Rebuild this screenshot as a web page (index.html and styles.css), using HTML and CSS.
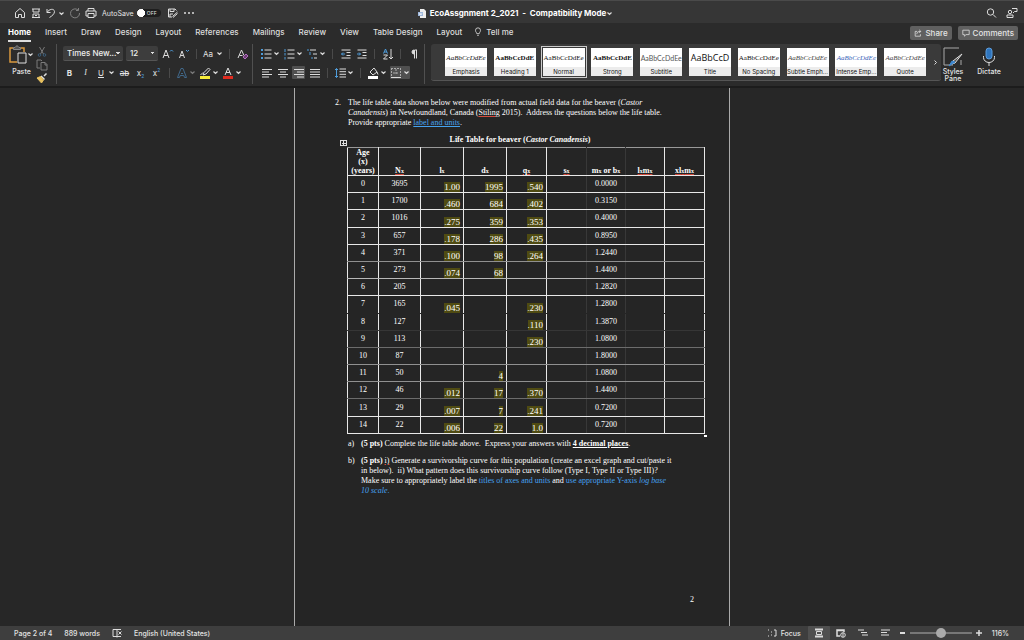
FILE: index.html
```html
<!DOCTYPE html>
<html lang="en">

<head>
    <meta charset="UTF-8">
    <meta name="viewport" content="width=device-width, initial-scale=1.0">
    <title>EcoAssgnment 2_2021</title>
    <link rel="stylesheet" href="styles.css">
</head>

<body>
    <svg class="sprite" aria-hidden="true">
        <symbol id="chev" viewBox="0 0 7 7"><path d="M1.5 2.5l2 2 2-2" fill="none" stroke="#ddd" stroke-width="1.2"/></symbol>
    </svg>

    <header class="titlebar">
        <div class="quick">
            <button class="tool" aria-label="Home"><svg viewBox="0 0 12 12"><path d="M1.5 5.5L6 1.5l4.500 4v5h-3v-3h-3v3h-3z"/></svg></button>
            <button class="tool" aria-label="Save"><svg viewBox="0 0 12 12"><path d="M2 2h8M2 10.500h8M3 2v3h6V2M3 10V7h6v3M5 8.500h2"/></svg></button>
            <button class="split" aria-label="Undo"><svg viewBox="0 0 12 12"><path d="M2 2v3.500h3.500M2 5.500C4 2 9 1 9.500 4.500 9.500 7 7 9 4.500 10.500"/></svg><svg class="chev"><use href="#chev"/></svg></button>
            <button class="tool dim" aria-label="Redo"><svg viewBox="0 0 12 12"><path d="M9 3A4.500 4.500 0 1 0 10.500 6M9.500 1v2.500H7"/></svg></button>
            <button class="tool" aria-label="Print"><svg viewBox="0 0 12 12"><path d="M3 4V1.500h6V4M3 9H1V4h10v5H9M3 6.500h6v4H3z"/></svg></button>
            <label class="autosave">AutoSave <input type="checkbox" class="toggle"><span class="off">OFF</span></label>
            <button class="tool edit" aria-label="Edit"><svg viewBox="0 0 12 12"><path d="M5 10H1.500V2H8l1.500 1.500M3 2v2.500h4V2M3 10V7h3M5.500 9.500l5-4.500M6 10.500l4.500-4"/></svg></button>
            <button class="tool" aria-label="More"><svg viewBox="0 0 12 12"><path d="M1 6h2M5 6h2M9 6h2" stroke-width="1.500"/></svg></button>
        </div>
        <h1 class="filename"><svg class="doc-icon" viewBox="0 0 9 9"><path d="M2 0h4l2 2v7H2z" fill="#eee"/><path d="M0 3h5v4H0z" fill="#9db7dc"/><path d="M1 4l1 2 .5-1.500.5 1.500 1-2" fill="none" stroke="#fff" stroke-width=".6"/></svg>EcoAssgnment 2_2021&nbsp; -&nbsp; Compatibility Mode<svg class="chev"><use href="#chev"/></svg></h1>
        <div class="account">
            <button class="tool" aria-label="Search"><svg viewBox="0 0 12 12"><circle cx="5.500" cy="5" r="3.200"/><path d="M8 7.500l3 3"/></svg></button>
            <button class="tool" aria-label="Account"><svg viewBox="0 0 12 12"><circle cx="4" cy="5" r="1.700"/><path d="M1 10.500V8h6v2.500zM6 1.500h5v3H8.500L7 6"/></svg></button>
        </div>
    </header>

    <nav class="tabs">
        <a class="tab active" href="#">Home</a>
        <a class="tab" href="#">Insert</a>
        <a class="tab" href="#">Draw</a>
        <a class="tab" href="#">Design</a>
        <a class="tab" href="#">Layout</a>
        <a class="tab" href="#">References</a>
        <a class="tab" href="#">Mailings</a>
        <a class="tab" href="#">Review</a>
        <a class="tab" href="#">View</a>
        <a class="tab" href="#">Table Design</a>
        <a class="tab" href="#">Layout</a>
        <a class="tab tell" href="#"><svg class="bulb" viewBox="0 0 8 12"><path d="M2.500 8C2.500 6.500 1 6 1 4a3 3 0 0 1 6 0c0 2-1.500 2.500-1.500 4zM3 10h2"/></svg>Tell me</a>
        <div class="actions">
            <button class="pill"><svg viewBox="0 0 10 10"><path d="M4 3H1.500v6H8V6.500M3.500 6.500C3.500 4 5 3 8.500 3M6.500 1l2 2-2 2"/></svg>Share</button>
            <button class="pill"><svg viewBox="0 0 10 10"><path d="M1 1.500h8v5.500H5L3 9V7H1z"/></svg>Comments</button>
        </div>
    </nav>

    <section class="ribbon">
        <div class="group clipboard">
            <button class="paste"><span class="paste-row"><svg class="paste-icon" viewBox="0 0 18 19"><path d="M4 3H1v14h7M12 3h3v4" stroke="#d9993f" stroke-width="1.500"/><path d="M4.500 4.500v-2H6l2-2 2 2h1.500v2z" stroke="#888" fill="#555"/><path d="M9 8h8v10H9z" stroke="#ddd" fill="#2b2b2b"/></svg><svg class="chev"><use href="#chev"/></svg></span>Paste</button>
            <div class="clip-tools">
                <button class="tool dim" aria-label="Cut"><svg viewBox="0 0 12 12"><path d="M3.500 1l4 7M8.500 1l-4 7"/><circle cx="3.500" cy="9" r="1.300" stroke="#4f9ddb"/><circle cx="8.500" cy="9" r="1.300" stroke="#4f9ddb"/></svg></button>
                <button class="tool dim" aria-label="Copy"><svg viewBox="0 0 12 12"><path d="M4 9H1V1h4l1 1M5 3.500h4l2 2V11H5zM9 3.500V6h2"/></svg></button>
                <button class="tool" aria-label="Format painter"><svg viewBox="0 0 12 12"><path d="M10.500 1.500L8 4M5 4l3.500 3.500" stroke-width="1.500"/><path d="M4.500 4.500L1 6l4.500 5 2-3z" fill="#e8c15f" stroke="#e8c15f"/></svg></button>
            </div>
        </div>

        <div class="group rows font-group">
            <div class="row">
                <select class="box font-name" aria-label="Font"><option>Times New...</option></select>
                <select class="box font-size" aria-label="Font size"><option>12</option></select>
                <button class="tool" aria-label="Grow font"><svg viewBox="0 0 12 12"><path d="M1 10l3-8 3 8M2 7.500h4"/><path d="M8 3.500L9.500 2 11 3.500" stroke="#4f9ddb"/></svg></button>
                <button class="tool" aria-label="Shrink font"><svg viewBox="0 0 12 12"><path d="M1.500 10l2.500-7 2.500 7M2.500 7.500h3"/><path d="M8 2l1.500 1.500L11 2" stroke="#4f9ddb"/></svg></button>
                <i class="sep"></i>
                <button class="split case" aria-label="Change case">Aa<svg class="chev"><use href="#chev"/></svg></button>
                <i class="sep"></i>
                <button class="tool" aria-label="Clear formatting"><svg viewBox="0 0 12 12"><path d="M1 10l3.500-8L7 7.500M2.500 7.500h3"/><path d="M6 9l3-3 2 2-3 3z" stroke="#b36ac0" fill="#6b3f73"/></svg></button>
            </div>
            <div class="row">
                <button class="tool letter"><b>B</b></button>
                <button class="tool letter serif"><em>I</em></button>
                <button class="split letter"><u>U</u><svg class="chev"><use href="#chev"/></svg></button>
                <button class="tool letter"><s>ab</s></button>
                <button class="tool letter">x<sub>2</sub></button>
                <button class="tool letter">x<sup>2</sup></button>
                <i class="sep"></i>
                <button class="split" aria-label="Text effects"><svg viewBox="0 0 12 12"><path d="M1.500 10.500L5 1.500h2l3.500 9h-2l-.700-2H4.200l-.700 2zM5 6.500h2" stroke="#41688a"/></svg><svg class="chev dim"><use href="#chev"/></svg></button>
                <button class="split" aria-label="Highlight"><svg viewBox="0 0 12 12"><path d="M9.500 1L5 5.500 4 8l3-1 4-4.500zM1.500 8L4 5.500"/><path d="M1 10.500h10" stroke="#f7ec3a" stroke-width="3"/></svg><svg class="chev"><use href="#chev"/></svg></button>
                <button class="split" aria-label="Font colour"><svg viewBox="0 0 12 12"><path d="M3 8l3-7 3 7M4 5.500h4"/><path d="M1 10.500h10" stroke="#e02b20" stroke-width="3"/></svg><svg class="chev"><use href="#chev"/></svg></button>
            </div>
        </div>

        <div class="group rows para-group">
            <div class="row">
                <button class="split" aria-label="Bullets"><svg viewBox="0 0 12 12"><path d="M4.500 2h7M4.500 6h7M4.500 10h7"/><path d="M1 2h2M1 6h2M1 10h2" stroke="#4f9ddb" stroke-width="2"/></svg><svg class="chev"><use href="#chev"/></svg></button>
                <button class="split" aria-label="Numbering"><svg viewBox="0 0 12 12"><path d="M4.500 2h7M4.500 6h7M4.500 10h7"/><path d="M2 1v3M2 5v2.500M2 9v2.500" stroke="#4f9ddb"/></svg><svg class="chev"><use href="#chev"/></svg></button>
                <button class="split" aria-label="Multilevel list"><svg viewBox="0 0 12 12"><path d="M4 2h6M7 6h4M8 10h3"/><path d="M1 2h2M4 4v3M6 9v2" stroke="#4f9ddb"/></svg><svg class="chev"><use href="#chev"/></svg></button>
                <i class="sep"></i>
                <button class="tool" aria-label="Decrease indent"><svg viewBox="0 0 12 12"><path d="M1.500 2h9M6.500 4.500h4M6.500 7.500h4M1.500 10h9"/><path d="M5 6H1.500M3 4.500L1.500 6 3 7.500" stroke="#4f9ddb"/></svg></button>
                <button class="tool" aria-label="Increase indent"><svg viewBox="0 0 12 12"><path d="M1.500 2h9M6.500 4.500h4M6.500 7.500h4M1.500 10h9"/><path d="M1 6h3.500M3 4.500L4.500 6 3 7.500" stroke="#4f9ddb"/></svg></button>
                <i class="sep"></i>
                <button class="tool" aria-label="Sort"><svg viewBox="0 0 12 12"><path d="M1.500 5.500L3.500 1l2 4.500M2 4h3" stroke="#4f9ddb"/><path d="M1.500 7h4l-4 4h4M9 1v10M7 9l2 2 2-2"/></svg></button>
                <i class="sep"></i>
                <button class="tool" aria-label="Show marks"><svg viewBox="0 0 12 12"><path d="M6.500 10.500V2H9M8.500 2v8.500"/><path d="M6 2a2 2 0 0 0 0 4z" fill="#ddd"/></svg></button>
            </div>
            <div class="row">
                <button class="tool" aria-label="Align left"><svg viewBox="0 0 12 12"><path d="M1 2.500h10M1 5h7M1 7.500h10M1 10h7"/></svg></button>
                <button class="tool" aria-label="Centre"><svg viewBox="0 0 12 12"><path d="M1 2.500h10M3 5h6M1 7.500h10M3 10h6"/></svg></button>
                <button class="tool on" aria-label="Align right"><svg viewBox="0 0 12 12"><path d="M1 2.500h10M4 5h7M1 7.500h10M4 10h7"/></svg></button>
                <button class="tool" aria-label="Justify"><svg viewBox="0 0 12 12"><path d="M1 2.500h10M1 5h10M1 7.500h10M1 10h10"/></svg></button>
                <i class="sep"></i>
                <button class="split" aria-label="Line spacing"><svg viewBox="0 0 12 12"><path d="M5.500 2H12M5.500 4.700H12M5.500 7.300H12M5.500 10H12"/><path d="M2.500 1.500v9M1 3l1.500-1.500L4 3M1 9l1.500 1.500L4 9" stroke="#4f9ddb"/></svg><svg class="chev"><use href="#chev"/></svg></button>
                <i class="sep"></i>
                <button class="split" aria-label="Shading"><svg viewBox="0 0 12 12"><path d="M3 5l4-4 3 4-4 3zM10 5l1 2.500"/><path d="M1 10.500h10" stroke="#fff" stroke-width="3"/></svg><svg class="chev"><use href="#chev"/></svg></button>
                <button class="split on" aria-label="Borders"><svg viewBox="0 0 12 12"><path d="M1 10.500h10"/><path d="M1.500 1v8M10.500 1v8M1 1.500h10M3 6h6M6 2v6" stroke-dasharray="2 1" stroke="#aaa"/></svg><svg class="chev"><use href="#chev"/></svg></button>
            </div>
        </div>

        <div class="gallery">
            <button class="style"><span class="sample italic">AaBbCcDdEe</span><span class="name">Emphasis</span></button>
            <button class="style"><span class="sample bold">AaBbCcDdE</span><span class="name">Heading 1</span></button>
            <button class="style selected"><span class="sample">AaBbCcDdEe</span><span class="name">Normal</span></button>
            <button class="style"><span class="sample bold">AaBbCcDdE</span><span class="name">Strong</span></button>
            <button class="style"><span class="sample subtitle">AaBbCcDdEe</span><span class="name">Subtitle</span></button>
            <button class="style"><span class="sample title">AaBbCcD</span><span class="name">Title</span></button>
            <button class="style"><span class="sample">AaBbCcDdEe</span><span class="name">No Spacing</span></button>
            <button class="style"><span class="sample italic soft">AaBbCcDdEe</span><span class="name">Subtle Emph...</span></button>
            <button class="style"><span class="sample italic blue">AaBbCcDdEe</span><span class="name">Intense Emp...</span></button>
            <button class="style"><span class="sample italic soft">AaBbCcDdEe</span><span class="name">Quote</span></button>
            <button class="next" aria-label="More styles"><svg viewBox="0 0 7 7"><path d="M2.500 1.500l2 2-2 2"/></svg></button>
        </div>

        <button class="big"><svg viewBox="0 0 20 20"><path d="M16 1H1v17h9M18 13v5" stroke="#aaa"/><path d="M19 7l-7 9-3 1 1-3z" fill="#555"/><path d="M12 15l-6 4 3-5z" fill="#3c87cf" stroke="#3c87cf"/></svg>Styles<br>Pane</button>
        <button class="big"><svg viewBox="0 0 20 20"><rect x="7" y="1" width="6" height="11" rx="3" fill="#2f75bd" stroke="#5b9bdb"/><path d="M4.500 9v1.500a5.500 5 0 0 0 11 0V9M10 15.500V19"/></svg>Dictate</button>
    </section>

    <main class="workspace">
        <article class="page">
            <div class="item">
                <span class="num">2.</span>
                <p>The life table data shown below were modified from actual field data for the beaver (<em>Castor<br>
                    Canadensis</em>) in Newfoundland, Canada (<span class="typo">Stiling</span> 2015).&nbsp; Address the questions below the life table.<br>
                    Provide appropriate <u class="blue-text">label and units</u>.</p>
            </div>

            <div class="table-wrap">
                <span class="handle"></span>
                <table class="life">
                    <caption>Life Table for beaver (<em>Castor Canadensis</em>)</caption>
                    <colgroup><col class="c-age"><col class="c-n"><col class="c-l"><col class="c-l"><col class="c-q"><col class="c-q"><col class="c-m"><col class="c-m"><col class="c-q"></colgroup>
                    <thead>
                        <tr>
                            <th>Age<br>(x)<br>(years)</th>
                            <th><span class="typo">N<sub>x</sub></span></th>
                            <th>l<sub>x</sub></th>
                            <th>d<sub>x</sub></th>
                            <th><span class="typo">q<sub>x</sub></span></th>
                            <th><span class="typo">s<sub>x</sub></span></th>
                            <th>m<sub>x</sub> or b<sub>x</sub></th>
                            <th><span class="typo">l<sub>x</sub>m<sub>x</sub></span></th>
                            <th><span class="typo">xl<sub>x</sub>m<sub>x</sub></span></th>
                        </tr>
                    </thead>
                    <tbody>
                        <tr><td>0</td><td>3695</td><td><mark>1.00</mark></td><td><mark>1995</mark></td><td><mark>.540</mark></td><td></td><td>0.0000</td><td></td><td></td></tr>
                        <tr><td>1</td><td>1700</td><td><mark>.460</mark></td><td><mark>684</mark></td><td><mark>.402</mark></td><td></td><td>0.3150</td><td></td><td></td></tr>
                        <tr><td>2</td><td>1016</td><td><mark>.275</mark></td><td><mark>359</mark></td><td><mark>.353</mark></td><td></td><td>0.4000</td><td></td><td></td></tr>
                        <tr><td>3</td><td>657</td><td><mark>.178</mark></td><td><mark>286</mark></td><td><mark>.435</mark></td><td></td><td>0.8950</td><td></td><td></td></tr>
                        <tr class="mid"><td>4</td><td>371</td><td><mark>.100</mark></td><td><mark>98</mark></td><td><mark>.264</mark></td><td></td><td>1.2440</td><td></td><td></td></tr>
                        <tr class="light"><td>5</td><td>273</td><td><mark>.074</mark></td><td><mark>68</mark></td><td></td><td></td><td>1.4400</td><td></td><td></td></tr>
                        <tr><td>6</td><td>205</td><td></td><td></td><td></td><td></td><td>1.2820</td><td></td><td></td></tr>
                        <tr class="none"><td>7</td><td>165</td><td><mark>.045</mark></td><td></td><td><mark>.230</mark></td><td></td><td>1.2800</td><td></td><td></td></tr>
                        <tr class="faint"><td>8</td><td>127</td><td></td><td></td><td><mark>.110</mark></td><td></td><td>1.3870</td><td></td><td></td></tr>
                        <tr class="dark"><td>9</td><td>113</td><td></td><td></td><td><mark>.230</mark></td><td></td><td>1.0800</td><td></td><td></td></tr>
                        <tr class="mid"><td>10</td><td>87</td><td></td><td></td><td></td><td></td><td>1.8000</td><td></td><td></td></tr>
                        <tr class="mid"><td>11</td><td>50</td><td></td><td><mark>4</mark></td><td></td><td></td><td>1.0800</td><td></td><td></td></tr>
                        <tr class="dark"><td>12</td><td>46</td><td><mark>.012</mark></td><td><mark>17</mark></td><td><mark>.370</mark></td><td></td><td>1.4400</td><td></td><td></td></tr>
                        <tr><td>13</td><td>29</td><td><mark>.007</mark></td><td><mark>7</mark></td><td><mark>.241</mark></td><td></td><td>0.7200</td><td></td><td></td></tr>
                        <tr><td>14</td><td>22</td><td><mark>.006</mark></td><td><mark>22</mark></td><td><mark>1.0</mark></td><td></td><td>0.7200</td><td></td><td></td></tr>
                    </tbody>
                </table>
                <span class="corner"></span>
            </div>

            <div class="item sub">
                <span class="num">a)</span>
                <p><b>(5 pts)</b> Complete the life table above.&nbsp; Express your answers with <b class="grammar">4 decimal places</b>.</p>
            </div>
            <div class="item sub">
                <span class="num">b)</span>
                <p><b>(5 pts)</b> <span class="typo">i)</span> Generate a survivorship curve for this population (create an excel graph and cut/paste it<br>
                    in below).&nbsp; ii) What pattern does this survivorship curve follow (Type I, Type II or Type III)?<br>
                    Make sure to appropriately label the <span class="blue-text">titles of axes and units</span> and <span class="blue-text">use appropriate Y-axis <em>log base<br>
                    10 scale</em>.</span></p>
            </div>
            <footer class="page-number">2</footer>
        </article>
    </main>

    <footer class="status">
        <span>Page 2 of 4</span>
        <span>889 words</span>
        <svg class="stat-icon" viewBox="0 0 10 10"><path d="M9 1.500H1v7h8M5 1.500v8M6.500 3.500l3 3M9.500 3.500l-3 3"/></svg>
        <span>English (United States)</span>
        <div class="views">
            <button class="focus"><svg class="stat-icon" viewBox="0 0 10 10"><path d="M1 2h1M1 8h1M4 4h1M4 7h1M7 2h2v6H7"/></svg>Focus</button>
            <button class="view on" aria-label="Print layout"><svg class="stat-icon" viewBox="0 0 10 10"><path d="M1 1.500h8M1 8.500h8" stroke-width="2"/><path d="M2.500 3.500h5v3h-5z"/></svg></button>
            <button class="view" aria-label="Web layout"><svg class="stat-icon" viewBox="0 0 10 10"><path d="M4 8H1V2h7v2M1 2.500h7" stroke-width="1.500"/><circle cx="7" cy="7" r="2.300"/><path d="M7 5v4"/></svg></button>
            <button class="view" aria-label="Outline"><svg class="stat-icon" viewBox="0 0 10 10"><path d="M0 2h6M3 4.500h6M4 7h6"/></svg></button>
            <button class="view" aria-label="Draft"><svg class="stat-icon" viewBox="0 0 10 10"><path d="M1 2h9M1 4.500h6M1 7h8"/></svg></button>
            <button class="zoom" aria-label="Zoom out"><svg viewBox="0 0 6 6"><path d="M0 3h5" stroke-width="2"/></svg></button>
            <input class="slider" type="range" min="0" max="100" value="51" aria-label="Zoom">
            <button class="zoom" aria-label="Zoom in"><svg viewBox="0 0 6 6"><path d="M0 3h6M3 0v6" stroke-width="1.500"/></svg></button>
            <span class="percent">116%</span>
        </div>
    </footer>
</body>

</html>
```
FILE: styles.css
```css
* {
    box-sizing: border-box;
}

body {
    display: flex;
    flex-direction: column;
    height: 100vh;
    margin: 0;
    overflow: hidden;
    background-color: #272727;
    color: #e4e4e4;
    font-family: Inter, "Liberation Sans", sans-serif;
    font-size: 7px;
}

button {
    display: flex;
    align-items: center;
    justify-content: center;
    padding: 0;
    border: none;
    background: none;
    color: inherit;
    font: inherit;
}

svg {
    flex: none;
    width: 12px;
    height: 12px;
    fill: none;
    stroke: #ddd;
}

.sprite {
    position: absolute;
    width: 0;
    height: 0;
}

.chev {
    width: 7px;
    height: 7px;
}

.dim {
    opacity: 0.45;
}

/* title bar */
.titlebar {
    display: grid;
    grid-template-columns: 1fr auto 1fr;
    align-items: center;
    height: 23px;
    padding: 2px 6px 0 13px;
    border-top: 1px solid #4a4a4a;
    background-color: #363636;
}

.quick,
.account {
    display: flex;
    align-items: center;
    gap: 3px;
}

.account {
    justify-content: flex-end;
    gap: 8px;
}

.autosave {
    display: flex;
    align-items: center;
    gap: 3px;
    position: relative;
    margin-left: 2px;
}

.toggle {
    appearance: none;
    width: 24px;
    height: 8px;
    margin: 0;
    border-radius: 4px;
    background: radial-gradient(circle at 4px 4px, #fff 4px, #1e1e1e 4px);
}

.off {
    position: absolute;
    right: 4px;
    font-size: 5px;
}

.edit {
    margin-left: 3px;
}

.filename {
    display: flex;
    align-items: center;
    margin: 0;
    color: #fff;
    font-size: 8px;
    font-weight: 700;
}

.doc-icon {
    width: 9px;
    height: 9px;
    margin-right: 3px;
    stroke: none;
}

/* tabs */
.tabs {
    display: flex;
    align-items: center;
    gap: 14px;
    height: 20px;
    padding: 0 6px 0 8px;
    background-color: #2b2b2b;
    font-size: 8px;
    font-weight: 500;
}

.tab {
    padding: 3px 0;
    border-bottom: 2px solid transparent;
    color: #ddd;
    line-height: 10px;
    text-decoration: none;
    white-space: nowrap;
}

.tab.active {
    border-color: #ddd;
    color: #fff;
    font-weight: 700;
}

.tell {
    display: flex;
    gap: 4px;
    margin-left: -2px;
}

.bulb {
    width: 8px;
    height: 10px;
}

.actions {
    display: flex;
    gap: 6px;
    margin-left: auto;
}

.pill {
    gap: 3px;
    height: 14px;
    padding: 0 4px;
    border-radius: 2px;
    background-color: #606060;
    font-weight: 500;
}

.pill svg {
    width: 8px;
    height: 8px;
}

/* ribbon */
.ribbon {
    display: flex;
    height: 45px;
    padding-bottom: 2px;
    border-bottom: 2px solid #1c1c1c;
    background-color: #2b2b2b;
}

.group {
    display: flex;
    height: 40px;
    margin-top: 1px;
    border-right: 1px solid #505050;
}

.clipboard {
    width: 57px;
    padding: 1px 6px 0 9px;
    gap: 1px;
}

.paste,
.big {
    flex-direction: column;
    justify-content: flex-start;
    gap: 3px;
    font-weight: 500;
}

.paste-row {
    display: flex;
    align-items: center;
}

.paste-icon {
    width: 18px;
    height: 19px;
}

.clip-tools,
.rows {
    display: flex;
    flex-direction: column;
}

.rows {
    gap: 4px;
    padding-top: 2px;
}

.font-group {
    width: 196px;
    padding-left: 6px;
}

.para-group {
    width: 172px;
    padding-left: 7px;
}

.row {
    display: flex;
    align-items: center;
    gap: 3px;
    height: 15px;
}

.tool {
    width: 13px;
    height: 13px;
}

.split {
    width: 20px;
    height: 13px;
    justify-content: space-between;
}

.on {
    border-radius: 1px;
    background-color: #505050;
}

.sep {
    width: 1px;
    height: 10px;
    margin: 0 3px;
    background-color: #4a4a4a;
}

.box {
    appearance: none;
    height: 15px;
    padding: 0 4px;
    border: none;
    border-bottom: 1px solid #555;
    border-radius: 2px;
    background-color: #3d3d3d;
    background-image: linear-gradient(45deg, transparent 50%, #ddd 50%), linear-gradient(-45deg, transparent 50%, #ddd 50%);
    background-position: right 5px center, right 3px center;
    background-repeat: no-repeat;
    background-size: 2px 2px;
    color: #eee;
    font: 500 8px Inter, sans-serif;
}

.font-name {
    width: 60px;
}

.font-size {
    width: 32px;
}

.case,
.letter {
    font-size: 8px;
}

.split.letter u {
    padding-left: 3px;
}

.serif {
    font-family: "Liberation Serif", serif;
}

sub,
sup {
    font-size: 6px;
    line-height: 0;
}

.tool sub,
.tool sup {
    color: #4f9ddb;
    font-size: 5px;
}

.tool sub {
    padding-top: 6px;
}

.tool sup {
    padding-bottom: 6px;
}

/* style gallery */
.gallery {
    display: flex;
    flex: 1;
    align-items: center;
    justify-content: space-between;
    height: 37px;
    margin: 1px 2px 0 6px;
    padding: 0 2px 0 13px;
    border-bottom: 1px solid #555;
    border-radius: 3px;
    background-color: #3a3a3a;
}

.style {
    flex-direction: column;
    width: 44px;
    height: 30px;
    border: 1px solid #3a3a3a;
    background-color: #fff;
    color: #111;
}

.style.selected {
    outline: 1px solid #ccc;
}

.sample {
    width: 100%;
    height: 19px;
    font: 7px/20px "Liberation Serif", serif;
    text-align: center;
    white-space: nowrap;
}

.name {
    width: 100%;
    background-color: #ececec;
    font-size: 6px;
    line-height: 9px;
    white-space: nowrap;
}

.italic {
    font-style: italic;
}

.bold {
    font-weight: 700;
}

.subtitle {
    color: #555;
    font-family: Lato, sans-serif;
}

.title {
    font-family: "Open Sans", sans-serif;
    font-size: 9px;
}

.soft {
    color: #444;
}

.blue {
    color: #3a66b8;
}

.next svg {
    width: 7px;
    height: 7px;
}

.big {
    width: 20px;
    padding-top: 4px;
    gap: 1px;
    line-height: 7px;
    white-space: nowrap;
}

.big svg {
    width: 20px;
    height: 20px;
}

.big:last-child {
    margin: 0 25px 0 16px;
}

/* document */
.workspace {
    display: flex;
    flex: 1;
    justify-content: center;
    min-height: 0;
}

.page {
    display: flex;
    flex-direction: column;
    width: 436px;
    padding: 10px 20px 21px 40px;
    border: solid #aaa;
    border-width: 0 1px;
    background-color: #252525;
    color: #fff;
    font: 8px/10px "Liberation Serif", serif;
}

.item {
    display: flex;
}

.item p {
    margin: 0;
    white-space: nowrap;
}

.num {
    width: 13px;
}

.sub {
    margin: 4px 0 3px 13px;
}

.typo {
    text-decoration: underline #d34a3d;
}

.grammar {
    text-decoration: underline;
}

.blue-text {
    color: #45a2f0;
}

.table-wrap {
    position: relative;
    width: 357px;
    margin: 7px 0 1px 12px;
}

.handle {
    position: absolute;
    left: -7px;
    top: 5px;
    width: 7px;
    height: 6px;
    border: 1px solid #ddd;
    background: linear-gradient(#ddd, #ddd) center / 1px 4px no-repeat, linear-gradient(#ddd, #ddd) center / 4px 1px no-repeat;
}

.corner {
    position: absolute;
    right: -3px;
    bottom: -3px;
    width: 3px;
    height: 2px;
    background-color: #fff;
}

.life {
    width: 100%;
    height: 287px;
    table-layout: fixed;
    border-collapse: collapse;
    border: 1px solid #ddd;
}

.life caption {
    height: 12px;
    padding-right: 12px;
    font-weight: 700;
    text-align: center;
}

.c-age {
    width: 31px;
}

.c-n {
    width: 42px;
}

.c-l {
    width: 43px;
}

.c-q {
    width: 40px;
}

.c-m {
    width: 39px;
}

.life th,
.life td {
    height: 17px;
    padding: 0;
    border: 1px solid #e8e8e8;
    text-align: center;
}

.life th {
    height: 27px;
    border-top-color: #999;
    line-height: 9px;
    vertical-align: bottom;
}

.life sub {
    vertical-align: baseline;
}

.life td:nth-child(3),
.life td:nth-child(4),
.life td:nth-child(5) {
    padding-right: 3px;
    text-align: right;
    vertical-align: bottom;
}

.life td:nth-child(6),
.life th:nth-child(6),
.life td:nth-child(7),
.life th:nth-child(7) {
    border-right-color: #383838;
}

.life td:nth-child(7),
.life th:nth-child(7),
.life td:nth-child(8),
.life th:nth-child(8) {
    border-left-color: #383838;
}

.life .mid td {
    border-bottom-color: #909090;
}

.life .light td {
    border-bottom-color: #b8b8b8;
}

.life .dark td {
    border-bottom-color: #6c6c6c;
}

.life .faint td {
    border-bottom-color: #363636;
}

.life .none td {
    border-bottom-color: #252525;
}

.life mark {
    display: block;
    width: fit-content;
    margin-left: auto;
    background-color: #4f4b12;
    color: #fff;
    font-size: 9px;
}

.page-number {
    margin: auto 15px 0 0;
    text-align: right;
}

/* status bar */
.status {
    display: flex;
    align-items: center;
    gap: 12px;
    height: 14px;
    padding: 0 15px 0 14px;
    background-color: #3e3e3e;
    font-weight: 500;
}

.stat-icon {
    width: 10px;
    height: 10px;
}

.views {
    display: flex;
    align-items: center;
    height: 100%;
    margin-left: auto;
}

.focus {
    gap: 4px;
    margin-right: 7px;
}

.view {
    width: 22px;
    height: 100%;
}

.zoom {
    width: 6px;
    margin: 0 4px;
}

.zoom svg {
    width: 6px;
    height: 6px;
}

.slider {
    appearance: none;
    width: 62px;
    height: 10px;
    margin: 0;
    background: linear-gradient(#777, #777) center / 100% 2px no-repeat;
}

.slider::-webkit-slider-thumb {
    appearance: none;
    width: 10px;
    height: 10px;
    border-radius: 50%;
    background-color: #aaa;
}

.percent {
    margin-left: 6px;
}
```
